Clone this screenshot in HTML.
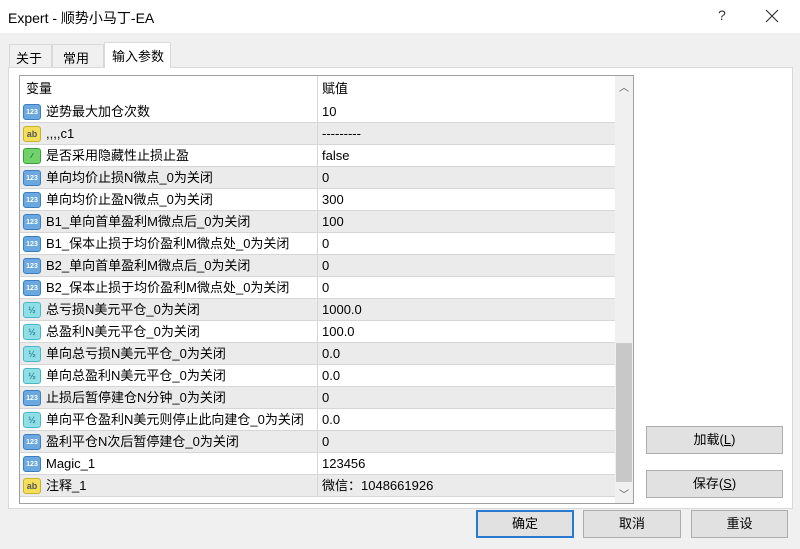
<!DOCTYPE html><html><head><meta charset="utf-8"><style>
*{margin:0;padding:0;box-sizing:border-box}
body{width:800px;height:549px;background:#f0f0f0;font-family:"Liberation Sans","Noto Sans CJK SC",sans-serif;font-size:13px;color:#000;position:relative;overflow:hidden}
.a{position:absolute}
.title{left:0;top:0;width:800px;height:33px;background:#fff}
.tab{top:44px;height:24px;background:#f0f0f0;border:1px solid #d9d9d9;border-bottom:none;padding:3px 0 0 6px}
.panel{left:8px;top:67px;width:785px;height:442px;background:#fff;border:1px solid #d9d9d9}
.grid{left:19px;top:75px;width:615px;height:429px;border:1px solid #a0a0a0;background:#fff;overflow:hidden}
.row{position:absolute;left:0;width:595px;height:22px;border-bottom:1px solid #d6d6d6;line-height:22px}
.row.g{background:#ebebeb}
.row .n{position:absolute;left:26px}
.row .v{position:absolute;left:302px}
.row .d{position:absolute;left:297px;top:0;width:1px;height:22px;background:#d6d6d6}
.ic{position:absolute;left:3px;top:3px;width:18px;height:16px;border-radius:3px;font-size:7px;font-weight:bold;line-height:15px;text-align:center;font-style:normal}
.i1{background:#6aa8df;color:#fff;border:1px solid #3c7fc0}
.i2{background:#f3df5a;color:#555;border:1px solid #c9b22a;font-size:9px}
.i3{background:#8ee0e6;color:#3a7fa0;border:1px solid #4bb6c4;font-size:9px}
.i4{background:#6fd36a;border:1px solid #3aa03a;color:#145}
.btn{height:28px;background:#e1e1e1;border:1px solid #adadad;text-align:center;line-height:26px}
</style></head><body>
<div class="a title"><span class="a" style="left:8px;top:8px;font-size:14px">Expert - 顺势小马丁-EA</span><span class="a" style="left:718px;top:7px;font-size:14px;color:#333">?</span>
<svg class="a" style="left:765px;top:9px" width="14" height="14"><path d="M1 1L13 13M13 1L1 13" stroke="#333" stroke-width="1.2"/></svg></div>
<div class="a tab" style="left:9px;width:43px">关于</div>
<div class="a tab" style="left:52px;width:52px;padding-left:10px">常用</div>
<div class="a panel"></div>
<div class="a tab" style="left:104px;top:42px;width:67px;height:26px;background:#fff;z-index:2;padding-left:7px">输入参数</div>
<div class="a grid">
<div class="row" style="top:0;height:25px;border:none"><span class="n" style="left:6px;top:2px">变量</span><span class="v" style="top:2px">赋值</span><span class="d" style="height:25px"></span></div>
<div class="row" style="top:25px"><i class="ic i1">123</i><span class="n">逆势最大加仓次数</span><span class="d"></span><span class="v">10</span></div>
<div class="row g" style="top:47px"><i class="ic i2">ab</i><span class="n">,,,,c1</span><span class="d"></span><span class="v">---------</span></div>
<div class="row" style="top:69px"><i class="ic i4">⁄</i><span class="n">是否采用隐藏性止损止盈</span><span class="d"></span><span class="v">false</span></div>
<div class="row g" style="top:91px"><i class="ic i1">123</i><span class="n">单向均价止损N微点_0为关闭</span><span class="d"></span><span class="v">0</span></div>
<div class="row" style="top:113px"><i class="ic i1">123</i><span class="n">单向均价止盈N微点_0为关闭</span><span class="d"></span><span class="v">300</span></div>
<div class="row g" style="top:135px"><i class="ic i1">123</i><span class="n">B1_单向首单盈利M微点后_0为关闭</span><span class="d"></span><span class="v">100</span></div>
<div class="row" style="top:157px"><i class="ic i1">123</i><span class="n">B1_保本止损于均价盈利M微点处_0为关闭</span><span class="d"></span><span class="v">0</span></div>
<div class="row g" style="top:179px"><i class="ic i1">123</i><span class="n">B2_单向首单盈利M微点后_0为关闭</span><span class="d"></span><span class="v">0</span></div>
<div class="row" style="top:201px"><i class="ic i1">123</i><span class="n">B2_保本止损于均价盈利M微点处_0为关闭</span><span class="d"></span><span class="v">0</span></div>
<div class="row g" style="top:223px"><i class="ic i3">½</i><span class="n">总亏损N美元平仓_0为关闭</span><span class="d"></span><span class="v">1000.0</span></div>
<div class="row" style="top:245px"><i class="ic i3">½</i><span class="n">总盈利N美元平仓_0为关闭</span><span class="d"></span><span class="v">100.0</span></div>
<div class="row g" style="top:267px"><i class="ic i3">½</i><span class="n">单向总亏损N美元平仓_0为关闭</span><span class="d"></span><span class="v">0.0</span></div>
<div class="row" style="top:289px"><i class="ic i3">½</i><span class="n">单向总盈利N美元平仓_0为关闭</span><span class="d"></span><span class="v">0.0</span></div>
<div class="row g" style="top:311px"><i class="ic i1">123</i><span class="n">止损后暂停建仓N分钟_0为关闭</span><span class="d"></span><span class="v">0</span></div>
<div class="row" style="top:333px"><i class="ic i3">½</i><span class="n">单向平仓盈利N美元则停止此向建仓_0为关闭</span><span class="d"></span><span class="v">0.0</span></div>
<div class="row g" style="top:355px"><i class="ic i1">123</i><span class="n">盈利平仓N次后暂停建仓_0为关闭</span><span class="d"></span><span class="v">0</span></div>
<div class="row" style="top:377px"><i class="ic i1">123</i><span class="n">Magic_1</span><span class="d"></span><span class="v">123456</span></div>
<div class="row g" style="top:399px"><i class="ic i2">ab</i><span class="n">注释_1</span><span class="d"></span><span class="v">微信：1048661926</span></div>
<div class="a" style="left:595px;top:0;width:18px;height:427px;background:#f0f0f0"></div>
<div class="a" style="left:599px;top:3px;font-size:10px;color:#555">︿</div>
<div class="a" style="left:596px;top:267px;width:16px;height:139px;background:#c8c8c8"></div>
<div class="a" style="left:599px;top:410px;font-size:10px;color:#555">﹀</div>
</div>
<div class="a btn" style="left:646px;top:426px;width:137px">加载(<u>L</u>)</div>
<div class="a btn" style="left:646px;top:470px;width:137px">保存(<u>S</u>)</div>
<div class="a btn" style="left:476px;top:510px;width:98px;border:2px solid #2a7ad2;line-height:24px">确定</div>
<div class="a btn" style="left:583px;top:510px;width:98px">取消</div>
<div class="a btn" style="left:691px;top:510px;width:97px">重设</div>
</body></html>
